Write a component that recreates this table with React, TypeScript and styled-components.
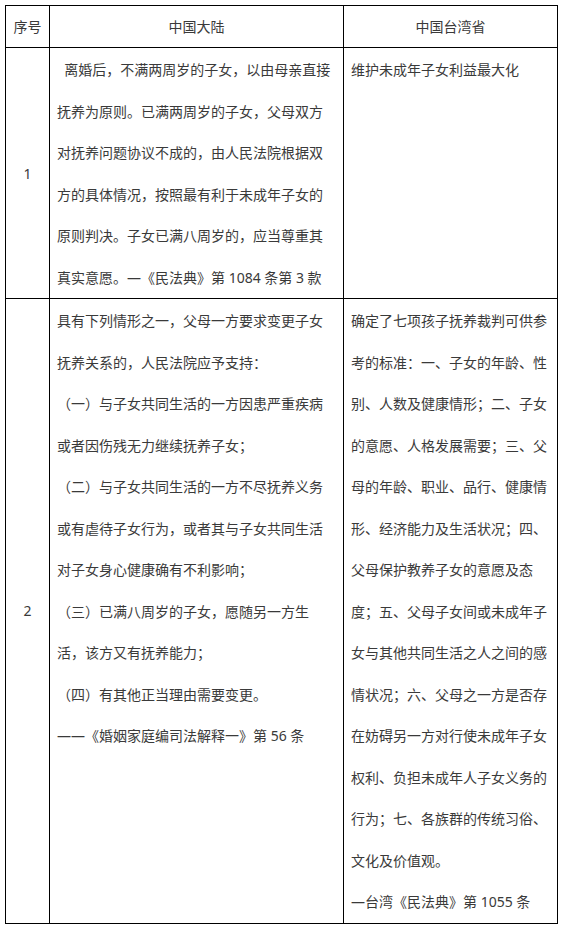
import React from "react";
import styled, { createGlobalStyle } from "styled-components";

const GlobalStyle = createGlobalStyle`
  html, body {
    margin: 0;
    padding: 0;
    background: #ffffff;
  }
  body {
    font-family: "Noto Sans", "Noto Sans CJK SC", sans-serif;
    color: #3a3a3a;
  }
`;

const Page = styled.div`
  padding: 5px;
`;

const Table = styled.div`
  display: grid;
  grid-template-columns: 43px 293px 213px;
  gap: 1px;
  padding: 1px;
  width: max-content;
  background: #000000;
  font-size: 14px;
  text-spacing-trim: space-all;
`;

const HeadCell = styled.div`
  background: #ffffff;
  text-align: center;
  line-height: 41px;
  font-size: 14px;
  color: #3a3a3a;
`;

const NumCell = styled.div`
  background: #ffffff;
  display: flex;
  align-items: center;
  justify-content: center;
  font-size: 14px;
  color: #3a3a3a;
`;

const TextCell = styled.div`
  background: #ffffff;
  padding: 1px 7px 0 7px;
  line-height: 41.5px;
  font-size: 14px;
  color: #3a3a3a;
  word-break: normal;
  line-break: strict;
`;

const Para = styled.p`
  margin: 0;
`;

const rows: { num: string; mainland: string[]; taiwan: string[] }[] = [
  {
    num: "1",
    mainland: [
      "\u00a0\u00a0离婚后，不满两周岁的子女，以由母亲直接抚养为原则。已满两周岁的子女，父母双方对抚养问题协议不成的，由人民法院根据双方的具体情况，按照最有利于未成年子女的原则判决。子女已满八周岁的，应当尊重其真实意愿。—《民法典》第 1084 条第 3 款",
    ],
    taiwan: ["维护未成年子女利益最大化"],
  },
  {
    num: "2",
    mainland: [
      "具有下列情形之一，父母一方要求变更子女抚养关系的，人民法院应予支持：",
      "（一）与子女共同生活的一方因患严重疾病或者因伤残无力继续抚养子女；",
      "（二）与子女共同生活的一方不尽抚养义务或有虐待子女行为，或者其与子女共同生活对子女身心健康确有不利影响；",
      "（三）已满八周岁的子女，愿随另一方生活，该方又有抚养能力；",
      "（四）有其他正当理由需要变更。",
      "——《婚姻家庭编司法解释一》第 56 条",
    ],
    taiwan: [
      "确定了七项孩子抚养裁判可供参考的标准：一、子女的年龄、性别、人数及健康情形；二、子女的意愿、人格发展需要；三、父母的年龄、职业、品行、健康情形、经济能力及生活状况；四、父母保护教养子女的意愿及态度；五、父母子女间或未成年子女与其他共同生活之人之间的感情状况；六、父母之一方是否存在妨碍另一方对行使未成年子女权利、负担未成年人子女义务的行为；七、各族群的传统习俗、文化及价值观。",
      "—台湾《民法典》第 1055 条",
    ],
  },
];

export default function App() {
  return (
    <>
      <GlobalStyle />
      <Page>
        <Table>
          <HeadCell>序号</HeadCell>
          <HeadCell>中国大陆</HeadCell>
          <HeadCell>中国台湾省</HeadCell>
          {rows.map((row) => (
            <React.Fragment key={row.num}>
              <NumCell>{row.num}</NumCell>
              <TextCell>
                {row.mainland.map((p, i) => (
                  <Para key={i}>{p}</Para>
                ))}
              </TextCell>
              <TextCell>
                {row.taiwan.map((p, i) => (
                  <Para key={i}>{p}</Para>
                ))}
              </TextCell>
            </React.Fragment>
          ))}
        </Table>
      </Page>
    </>
  );
}
